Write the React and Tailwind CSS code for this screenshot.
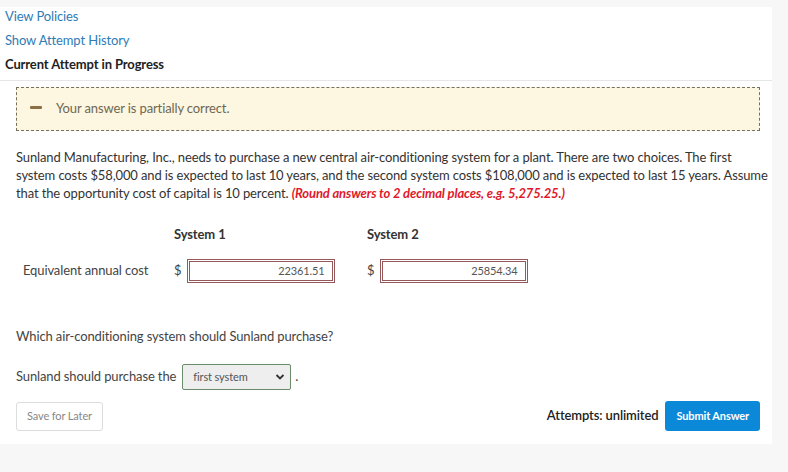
import { useState } from 'react';

function MoneyInput({ value }) {
  return (
    <div className="flex items-center gap-[6px]">
      <span className="text-[13px] text-[#444]">$</span>
      <div className="w-[148px] h-[24px] border-[3px] border-double border-[#94585b] bg-white flex items-center justify-end pr-[8px]">
        <span className="text-[11px] text-[#555]">{value}</span>
      </div>
    </div>
  );
}

export default function App() {
  const [choice, setChoice] = useState('first system');

  return (
    <div
      className="w-[788px] h-[472px] bg-[#f7f7f7] pt-[7px] overflow-hidden text-[#333] tracking-[-0.12px]"
      style={{ fontFamily: 'Lato, "Open Sans", sans-serif' }}
    >
      <div className="w-[772px] bg-white">
        {/* Header links */}
        <div className="px-[5px] pb-[7px] border-b border-[#e6e6e6] text-[13px] leading-[18px] flex flex-col gap-[6px]">
          <a className="block text-[#2f7bb6]">View Policies</a>
          <a className="block text-[#2f7bb6]">Show Attempt History</a>
          <div className="font-bold text-[#222]">Current Attempt in Progress</div>
        </div>

        <div className="pl-[16px] pr-[12px] pt-[6px] pb-[13px]">
          {/* Feedback box */}
          <div className="w-[744px] h-[44px] bg-[#fdf6e1] border border-dashed border-[#76705f] flex items-center pl-[13px] gap-[14px]">
            <span className="block w-[12px] h-[3px] bg-[#8a7044] rounded-[1px] mt-[-3px]"></span>
            <span className="text-[13px] text-[#6e6852]">Your answer is partially correct.</span>
          </div>

          {/* Question text */}
          <p className="mt-[17px] mr-[-10px] text-[13px] leading-[18px] text-[#333]">
            Sunland Manufacturing, Inc., needs to purchase a new central air-conditioning system for a plant. There are two choices. The first system costs $58,000 and is expected to last 10 years, and the second system costs $108,000 and is expected to last 15 years. Assume that the opportunity cost of capital is 10 percent.{' '}
            <em className="font-bold text-[#e0192b]">(Round answers to 2 decimal places, e.g. 5,275.25.)</em>
          </p>

          {/* Answer table */}
          <div className="mt-[20px] grid grid-cols-[158px_193px_200px] items-center">
            <div></div>
            <div className="text-[13px] font-bold text-[#333] h-[24px] leading-[24px]">System 1</div>
            <div className="text-[13px] font-bold text-[#333] h-[24px] leading-[24px]">System 2</div>
            <div className="mt-[13px] pl-[7px] text-[13px] text-[#444]">Equivalent annual cost</div>
            <div className="mt-[13px]"><MoneyInput value="22361.51" /></div>
            <div className="mt-[13px]"><MoneyInput value="25854.34" /></div>
          </div>

          <p className="mt-[44px] text-[13px] leading-[18px] text-[#444]">
            Which air-conditioning system should Sunland purchase?
          </p>

          <div className="mt-[19px] flex items-center text-[13px] text-[#444]">
            <span>Sunland should purchase the</span>
            <div className="ml-[6px] relative w-[109px] h-[26px] border border-[#6b8c6b] bg-[#eeeeee] rounded-[2px]">
              <select
                value={choice}
                onChange={(e) => setChoice(e.target.value)}
                className="appearance-none w-full h-full bg-transparent pl-[10px] text-[11px] text-[#555] outline-none"
              >
                <option value="first system">first system</option>
                <option value="second system">second system</option>
              </select>
              <svg className="absolute right-[5px] top-[8px] pointer-events-none" width="10" height="8" viewBox="0 0 10 8">
                <path d="M1.5 2 L5 5.5 L8.5 2" fill="none" stroke="#333" strokeWidth="1.8" />
              </svg>
            </div>
            <span className="ml-[4px]">.</span>
          </div>

          {/* Footer */}
          <div className="mt-[11px] flex items-center justify-between">
            <button className="h-[29px] px-[10px] border border-[#dcdcdc] rounded-[3px] text-[11px] text-[#888] bg-white">
              Save for Later
            </button>
            <div className="flex items-center gap-[7px]">
              <span className="text-[13px] font-semibold text-[#222]">Attempts: unlimited</span>
              <button className="h-[30px] px-[11px] rounded-[3px] bg-[#0b88d8] text-white text-[11px] font-bold">
                Submit Answer
              </button>
            </div>
          </div>
        </div>
      </div>
    </div>
  );
}
